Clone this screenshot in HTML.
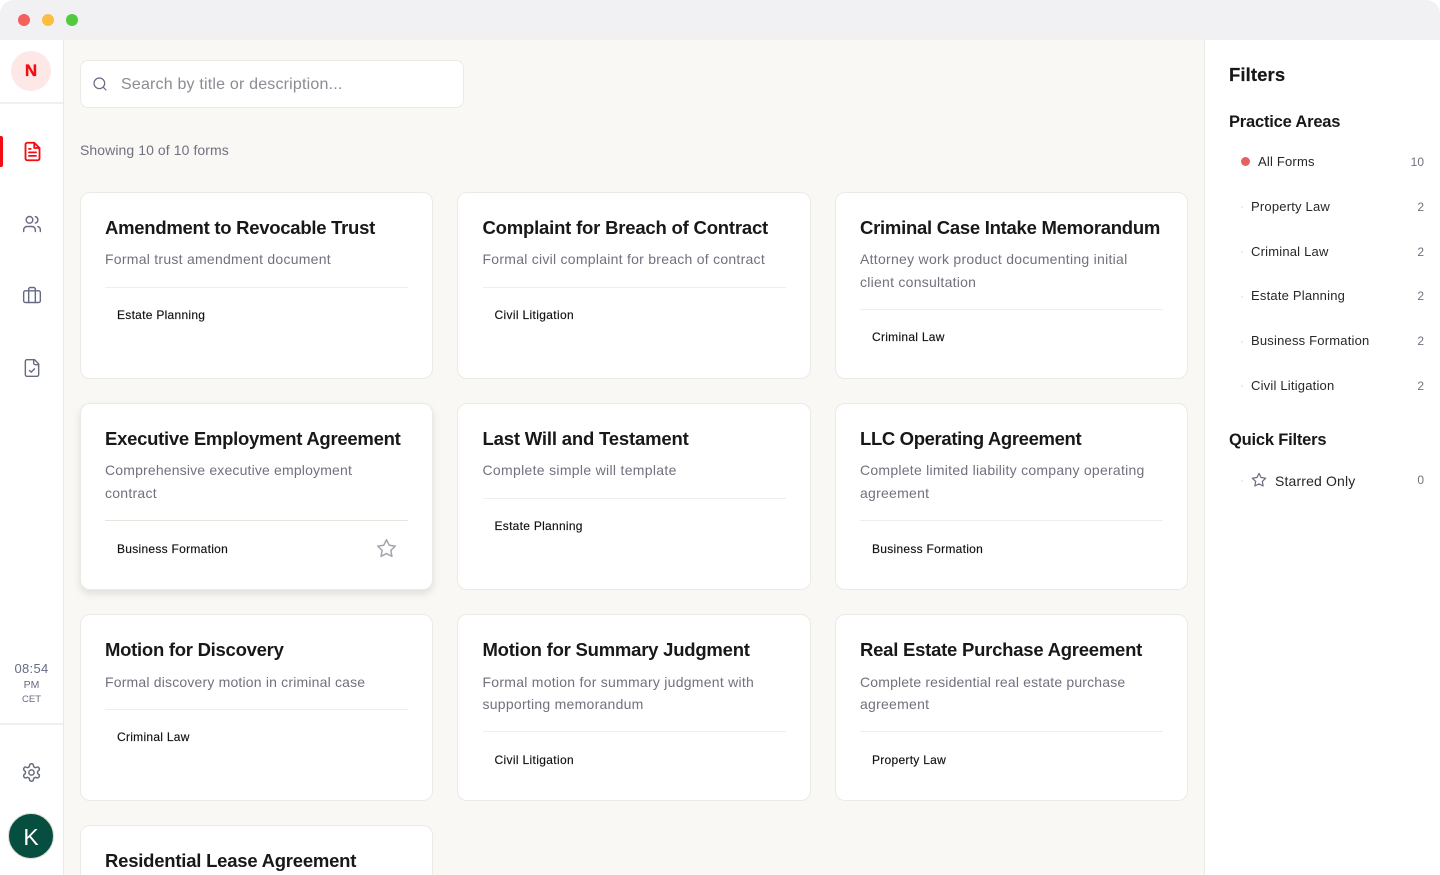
<!DOCTYPE html>
<html><head><meta charset="utf-8"><style>
html,body{margin:0;padding:0;width:1440px;height:875px;overflow:hidden;background:#fff;font-family:"Liberation Sans",sans-serif}
#w{position:relative;width:1440px;height:875px;overflow:hidden;background:#fff}
#w div,#w svg{position:absolute}
.t{white-space:nowrap;line-height:20px}
.card{width:351.33px;height:185px;background:#fff;border:1px solid #eceae4;border-radius:10px}
.h{font-size:18.5px;font-weight:bold;color:#18181b;letter-spacing:-.27px}
.d{font-size:14px;color:#71717f;letter-spacing:.26px}
.c{font-size:12px;color:#111;letter-spacing:.28px;-webkit-text-stroke:.15px #111}
.l{height:1px;background:#efeeea;width:303px}
.f{font-size:13px;color:#27272a;letter-spacing:.2px}
.n{font-size:12px;color:#71717f;text-align:right;width:30px;left:1394px}
.b{width:2px;height:2px;border-radius:50%;background:#e8e7e3;left:1241px}
.h2{font-size:16.5px;font-weight:bold;color:#18181b;left:1229px;letter-spacing:-.2px}
</style></head><body><div id="w">
<div style="left:0;top:0;width:1440px;height:40px;background:#f1f1f3;border-radius:14px 14px 0 0"></div>
<div style="left:64px;top:40px;width:1140px;height:835px;background:#f9f8f5"></div>
<div style="left:18px;top:14px;width:12px;height:12px;border-radius:50%;background:#f4605c"></div>
<div style="left:42px;top:14px;width:12px;height:12px;border-radius:50%;background:#fdbd41"></div>
<div style="left:66px;top:14px;width:12px;height:12px;border-radius:50%;background:#52c93f"></div>

<div style="left:0;top:40px;width:63px;height:835px;background:#fff;border-right:1px solid #eceae4"></div>
<div style="left:11px;top:51px;width:40px;height:40px;border-radius:50%;background:#fde7e7"></div>
<div class="t" style="left:11px;width:40px;text-align:center;top:61px;font-size:17px;font-weight:bold;color:#f40c12;-webkit-text-stroke:.3px #f40c12">N</div>
<div style="left:0;top:102px;width:63px;height:2px;background:#f1f0ec"></div>
<div style="left:0;top:136px;width:3px;height:31px;background:#f40c12;border-radius:0 2px 2px 0"></div>
<svg style="left:21.5px;top:141px" width="21" height="21" viewBox="0 0 24 24" fill="none" stroke="#f40c12" stroke-width="2.1" stroke-linecap="round" stroke-linejoin="round"><path d="M14 2H6a2 2 0 0 0-2 2v16a2 2 0 0 0 2 2h12a2 2 0 0 0 2-2V8z"/><path d="M14 2v6h6M8 13h8M8 17h8M8 9h2"/></svg>
<svg style="left:21.5px;top:213.5px" width="20" height="20" viewBox="0 0 24 24" fill="none" stroke="#676b80" stroke-width="1.7" stroke-linecap="round" stroke-linejoin="round"><path d="M16 21v-2a4 4 0 0 0-4-4H6a4 4 0 0 0-4 4v2"/><circle cx="9" cy="7" r="4"/><path d="M22 21v-2a4 4 0 0 0-3-3.87M16 3.13a4 4 0 0 1 0 7.75"/></svg>
<svg style="left:21.5px;top:285px" width="20" height="20" viewBox="0 0 24 24" fill="none" stroke="#676b80" stroke-width="1.7" stroke-linecap="round" stroke-linejoin="round"><rect x="2" y="7" width="20" height="14" rx="2"/><path d="M16 21V5a2 2 0 0 0-2-2h-4a2 2 0 0 0-2 2v16"/></svg>
<svg style="left:21.5px;top:357.5px" width="20" height="20" viewBox="0 0 24 24" fill="none" stroke="#676b80" stroke-width="1.7" stroke-linecap="round" stroke-linejoin="round"><path d="M15 2H6a2 2 0 0 0-2 2v16a2 2 0 0 0 2 2h12a2 2 0 0 0 2-2V7z"/><path d="M14 2v4a2 2 0 0 0 2 2h4M9 15l2 2 4-4"/></svg>
<div class="t" style="left:0;width:63px;text-align:center;top:659px;font-size:13px;color:#676b80;letter-spacing:.3px">08:54</div>
<div class="t" style="left:0;width:63px;text-align:center;top:675px;font-size:10.5px;color:#676b80">PM</div>
<div class="t" style="left:0;width:63px;text-align:center;top:690px;font-size:9.5px;color:#676b80">CET</div>
<div style="left:0;top:723px;width:63px;height:2px;background:#f1f0ec"></div>
<svg style="left:21px;top:762px" width="21" height="21" viewBox="0 0 24 24" fill="none" stroke="#676b80" stroke-width="1.7" stroke-linecap="round" stroke-linejoin="round"><path d="M12.22 2h-.44a2 2 0 0 0-2 2v.18a2 2 0 0 1-1 1.73l-.43.25a2 2 0 0 1-2 0l-.15-.08a2 2 0 0 0-2.73.73l-.22.38a2 2 0 0 0 .73 2.73l.15.1a2 2 0 0 1 1 1.72v.51a2 2 0 0 1-1 1.74l-.15.09a2 2 0 0 0-.73 2.73l.22.38a2 2 0 0 0 2.73.73l.15-.08a2 2 0 0 1 2 0l.43.25a2 2 0 0 1 1 1.73V20a2 2 0 0 0 2 2h.44a2 2 0 0 0 2-2v-.18a2 2 0 0 1 1-1.73l.43-.25a2 2 0 0 1 2 0l.15.08a2 2 0 0 0 2.73-.73l.22-.39a2 2 0 0 0-.73-2.73l-.15-.08a2 2 0 0 1-1-1.74v-.5a2 2 0 0 1 1-1.74l.15-.09a2 2 0 0 0 .73-2.73l-.22-.38a2 2 0 0 0-2.73-.73l-.15.08a2 2 0 0 1-2 0l-.43-.25a2 2 0 0 1-1-1.73V4a2 2 0 0 0-2-2z"/><circle cx="12" cy="12" r="3"/></svg>
<div style="left:8px;top:813px;width:44px;height:44px;border-radius:50%;background:#064e3f;border:1.5px solid #dedbd3"></div>
<div class="t" style="left:7.5px;width:47px;text-align:center;top:826px;font-size:23px;line-height:22px;color:#fff">K</div>

<div style="left:80px;top:60px;width:382px;height:46px;background:#fff;border:1px solid #eceae4;border-radius:8px"></div>
<svg style="left:92px;top:76px" width="16" height="16" viewBox="0 0 24 24" fill="none" stroke="#676b80" stroke-width="1.8" stroke-linecap="round"><circle cx="11" cy="11" r="8"/><path d="m21 21-4.3-4.3"/></svg>
<div class="t" style="left:121px;top:75px;font-size:16px;color:#8b8b93;letter-spacing:.19px">Search by title or description...</div>
<div class="t" style="left:80px;top:140px;font-size:14px;color:#71717f;letter-spacing:.08px">Showing 10 of 10 forms</div>

<div class="card" style="left:80px;top:192px"></div>
<div class="t h" style="left:105px;top:218px">Amendment to Revocable Trust</div>
<div class="t d" style="left:105px;top:249px">Formal trust amendment document</div>
<div class="l" style="left:105px;top:287px"></div>
<div class="t c" style="left:117px;top:305px">Estate Planning</div>

<div class="card" style="left:457.33px;top:192px"></div>
<div class="t h" style="left:482.5px;top:218px;letter-spacing:-.2px">Complaint for Breach of Contract</div>
<div class="t d" style="left:482.5px;top:249px">Formal civil complaint for breach of contract</div>
<div class="l" style="left:482.5px;top:287px"></div>
<div class="t c" style="left:494.5px;top:305px;letter-spacing:.34px">Civil Litigation</div>

<div class="card" style="left:834.67px;top:192px"></div>
<div class="t h" style="left:860px;top:218px">Criminal Case Intake Memorandum</div>
<div class="t d" style="left:860px;top:249px;letter-spacing:.28px">Attorney work product documenting initial</div>
<div class="t d" style="left:860px;top:272px">client consultation</div>
<div class="l" style="left:860px;top:309px"></div>
<div class="t c" style="left:872px;top:327px">Criminal Law</div>

<div class="card" style="left:80px;top:403px;box-shadow:0 4px 8px rgba(0,0,0,.1)"></div>
<div class="t h" style="left:105px;top:429px">Executive Employment Agreement</div>
<div class="t d" style="left:105px;top:460px;letter-spacing:.17px">Comprehensive executive employment</div>
<div class="t d" style="left:105px;top:483px">contract</div>
<div class="l" style="left:105px;top:520px;background:#e6e4dc"></div>
<div class="t c" style="left:117px;top:539px">Business Formation</div>
<svg style="left:376px;top:538px" width="21" height="21" viewBox="0 0 24 24" fill="none" stroke="#a3a3ae" stroke-width="1.7" stroke-linejoin="round"><path d="M12 2l3.09 6.26L22 9.27l-5 4.87 1.18 6.88L12 17.77l-6.18 3.25L7 14.14 2 9.27l6.91-1.01z"/></svg>

<div class="card" style="left:457.33px;top:403px"></div>
<div class="t h" style="left:482.5px;top:429px;letter-spacing:-.18px">Last Will and Testament</div>
<div class="t d" style="left:482.5px;top:460px;letter-spacing:.31px">Complete simple will template</div>
<div class="l" style="left:482.5px;top:498px"></div>
<div class="t c" style="left:494.5px;top:516px">Estate Planning</div>

<div class="card" style="left:834.67px;top:403px"></div>
<div class="t h" style="left:860px;top:429px;letter-spacing:-.36px">LLC Operating Agreement</div>
<div class="t d" style="left:860px;top:460px">Complete limited liability company operating</div>
<div class="t d" style="left:860px;top:483px">agreement</div>
<div class="l" style="left:860px;top:520px"></div>
<div class="t c" style="left:872px;top:539px">Business Formation</div>

<div class="card" style="left:80px;top:614px"></div>
<div class="t h" style="left:105px;top:640px">Motion for Discovery</div>
<div class="t d" style="left:105px;top:672px;letter-spacing:.185px">Formal discovery motion in criminal case</div>
<div class="l" style="left:105px;top:709px"></div>
<div class="t c" style="left:117px;top:727px">Criminal Law</div>

<div class="card" style="left:457.33px;top:614px"></div>
<div class="t h" style="left:482.5px;top:640px;letter-spacing:-.23px">Motion for Summary Judgment</div>
<div class="t d" style="left:482.5px;top:672px">Formal motion for summary judgment with</div>
<div class="t d" style="left:482.5px;top:694px">supporting memorandum</div>
<div class="l" style="left:482.5px;top:731px"></div>
<div class="t c" style="left:494.5px;top:750px;letter-spacing:.34px">Civil Litigation</div>

<div class="card" style="left:834.67px;top:614px"></div>
<div class="t h" style="left:860px;top:640px;letter-spacing:-.24px">Real Estate Purchase Agreement</div>
<div class="t d" style="left:860px;top:672px;letter-spacing:.17px">Complete residential real estate purchase</div>
<div class="t d" style="left:860px;top:694px">agreement</div>
<div class="l" style="left:860px;top:731px"></div>
<div class="t c" style="left:872px;top:750px">Property Law</div>

<div class="card" style="left:80px;top:825px;height:49px;border-bottom:0;border-radius:10px 10px 0 0"></div>
<div class="t h" style="left:105px;top:851px;letter-spacing:-.23px">Residential Lease Agreement</div>

<div style="left:1204px;top:40px;width:235px;height:835px;background:#fff;border-left:1px solid #eceae4"></div>
<div class="t" style="left:1229px;top:65px;font-size:18.5px;font-weight:bold;color:#18181b;letter-spacing:.1px;-webkit-text-stroke:.2px #18181b">Filters</div>
<div class="t h2" style="top:112px">Practice Areas</div>
<div style="left:1241px;top:157px;width:9px;height:9px;border-radius:50%;background:#e5605f"></div>
<div class="t f" style="left:1258px;top:152px">All Forms</div><div class="t n" style="top:152px">10</div>
<div class="b" style="top:206px"></div><div class="t f" style="left:1251px;top:197px">Property Law</div><div class="t n" style="top:197px">2</div>
<div class="b" style="top:251px"></div><div class="t f" style="left:1251px;top:242px">Criminal Law</div><div class="t n" style="top:242px">2</div>
<div class="b" style="top:296px"></div><div class="t f" style="left:1251px;top:286px">Estate Planning</div><div class="t n" style="top:286px">2</div>
<div class="b" style="top:341px"></div><div class="t f" style="left:1251px;top:331px">Business Formation</div><div class="t n" style="top:331px">2</div>
<div class="b" style="top:385px"></div><div class="t f" style="left:1251px;top:376px">Civil Litigation</div><div class="t n" style="top:376px">2</div>
<div class="t h2" style="top:429.5px">Quick Filters</div>
<div class="b" style="top:480px"></div>
<svg style="left:1251px;top:472px" width="16" height="16" viewBox="0 0 24 24" fill="none" stroke="#676b80" stroke-width="1.8" stroke-linejoin="round"><path d="M12 2l3.09 6.26L22 9.27l-5 4.87 1.18 6.88L12 17.77l-6.18 3.25L7 14.14 2 9.27l6.91-1.01z"/></svg>
<div class="t" style="left:1275px;top:470.5px;font-size:14px;color:#27272a;letter-spacing:.15px">Starred Only</div><div class="t n" style="top:470px">0</div>
</div></body></html>
